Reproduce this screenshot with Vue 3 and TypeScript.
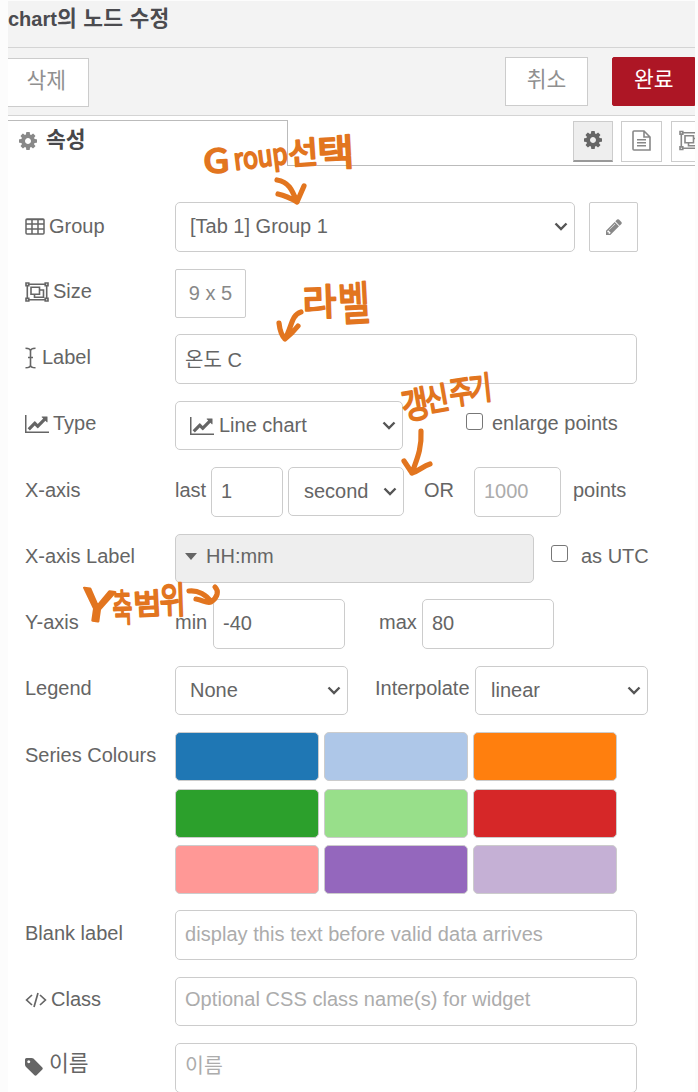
<script setup lang="ts">
import { defineComponent, h, ref } from 'vue'

type Shape = { box: string; d: string; stroke?: number }

const shapes: Record<string, Shape> = {
  cog: { box: '128 128 1536 1536', d: 'M1152 896q0-106-75-181t-181-75-181 75-75 181 75 181 181 75 181-75 75-181zm512-109v222q0 12-8 23t-20 13l-185 28q-19 54-39 91 35 50 107 138 10 12 10 25t-9 23q-27 37-99 108t-94 71q-12 0-26-9l-138-108q-44 23-91 38-16 136-29 186-7 28-36 28h-222q-14 0-24.5-8.5t-11.5-21.5l-28-184q-49-16-90-37l-141 107q-10 9-25 9-14 0-25-11-126-114-165-168-7-10-7-23 0-12 8-23 15-21 51-66.5t54-70.5q-27-50-41-99l-183-27q-13-2-21-12.5t-8-23.5v-222q0-12 8-23t19-13l186-28q14-46 39-92-40-57-107-138-10-12-10-24 0-10 9-23 26-36 98.5-107.5t94.5-71.5q13 0 26 10l138 107q44-23 91-38 16-136 29-186 7-28 36-28h222q14 0 24.5 8.5t11.5 21.5l28 184q49 16 90 37l142-107q9-9 24-9 13 0 25 10 129 119 165 170 7 8 7 22 0 12-8 23-15 21-51 66.5t-54 70.5q26 50 41 98l183 28q13 2 21 12.5t8 23.5z' },
  tag: { box: '128 128 1536 1536', d: 'M576 448q0-53-37.5-90.5t-90.5-37.5-90.5 37.5-37.5 90.5 37.5 90.5 90.5 37.5 90.5-37.5 37.5-90.5zm1067 576q0 53-37 90l-491 492q-39 37-91 37-53 0-90-37l-715-716q-38-37-64.5-101t-26.5-117v-416q0-52 38-90t90-38h416q53 0 117 26.5t102 64.5l715 714q37 39 37 91z' },
  pencil: { box: '128 128 1536 1536', d: 'M491 1536l91-91-235-235-91 91v107h128v128h107zm523-928q0-22-22-22-10 0-17 7l-542 542q-7 7-7 17 0 22 22 22 10 0 17-7l542-542q7-7 7-17zm-54-192l416 416-832 832h-416v-416zm683 96q0 53-37 90l-166 166-416-416 166-165q36-38 90-38 53 0 91 38l235 234q37 39 37 91z' },
  line: { box: '0 128 2048 1536', d: 'M2048 1536v128h-2048v-1536h128v1408h1920zm-128-1248v435q0 21-19.5 29.5t-35.5-7.5l-121-121-633 633q-10 10-23 10t-23-10l-233-233-416 416-192-192 585-585q10-10 23-10t23 10l233 233 464-464-121-121q-16-16-7.5-35.5t29.5-19.5h435q14 0 23 9t9 23z' },
  table: { box: '0 0 20 17', stroke: 1.5, d: 'M2 1H18Q19 1 19 2V15Q19 16 18 16H2Q1 16 1 15V2Q1 1 2 1ZM1 1.6H19M1 6H19M1 11H19M7 1V16M13 1V16' },
  objects: { box: '0 0 24 20', stroke: 1.6, d: 'M3.5 2.2H20.5M3.5 17.8H20.5M2.3 3.5V16.5M21.7 3.5V16.5M1 1H3.8V3.6H1ZM20.2 1H23V3.6H20.2ZM1 16.4H3.8V19H1ZM20.2 16.4H23V19H20.2ZM6 5.2H14.5V12.2H6ZM14.5 8H18.5V15.3H9.5V12.2' },
  cursor: { box: '0 0 11 22', stroke: 1.6, d: 'M0.5 1.2Q5.5 1.2 5.5 4V18Q5.5 20.8 0.5 20.8M10.5 1.2Q5.5 1.2 5.5 4M10.5 20.8Q5.5 20.8 5.5 18M3 10.5H8' },
  code: { box: '0 0 22 16', stroke: 1.7, d: 'M7 3L1.6 8L7 13M15 3L20.4 8L15 13M13 1L9 15' },
  file: { box: '0 0 19 21', stroke: 1.6, d: 'M2 1H12L18 7V20H2Q1 20 1 19V2Q1 1 2 1ZM12 1V7H18M5 9.8H14M5 12.8H14M5 15.8H14' },
  chevron: { box: '0 0 14 9', stroke: 2.4, d: 'M1.5 1.5L7 7L12.5 1.5' },
  caret: { box: '0 0 12 7', d: 'M0 0H12L6 7Z' }
}

const Icon = defineComponent({
  props: { name: { type: String, required: true } },
  setup(props) {
    return () => {
      const s = shapes[props.name]
      return h('svg', { viewBox: s.box, class: ['icon', 'icon-' + props.name], 'aria-hidden': 'true' }, [
        h('path', {
          d: s.d,
          fill: s.stroke ? 'none' : 'currentColor',
          stroke: s.stroke ? 'currentColor' : 'none',
          'stroke-width': s.stroke ?? 0
        })
      ])
    }
  }
})

const label = ref('온도 C')
const period = ref('1')
const points = ref('')
const yMin = ref('-40')
const yMax = ref('80')
const blank = ref('')
const cssClass = ref('')
const nodeName = ref('')
const enlarge = ref(false)
const utc = ref(false)
const colours = ['#1f77b4', '#aec7e8', '#ff7f0e', '#2ca02c', '#98df8a', '#d62728', '#ff9896', '#9467bd', '#c5b0d5']

type Ink = { t: string; x: number; y: number; w: number; size: number; rot: number }
const ink: Ink[] = [
  { t: 'G', x: 204, y: 173, w: 26, size: 32, rot: -3 },
  { t: 'roup', x: 235, y: 170, w: 54, size: 29, rot: -7 },
  { t: '선', x: 289, y: 165, w: 30, size: 31, rot: -4 },
  { t: '택', x: 318, y: 167, w: 37, size: 37, rot: -3 },
  { t: '라', x: 303, y: 316, w: 34, size: 37, rot: -2 },
  { t: '벨', x: 339, y: 321, w: 32, size: 46, rot: -3 },
  { t: '갱', x: 404, y: 420, w: 27, size: 36, rot: -10 },
  { t: '신', x: 427, y: 412, w: 24, size: 31, rot: -10 },
  { t: '주', x: 451, y: 405, w: 23, size: 32, rot: -8 },
  { t: '기', x: 470, y: 401, w: 23, size: 32, rot: -6 },
  { t: 'Y', x: 80, y: 619, w: 31, size: 43, rot: 8 },
  { t: '축', x: 113, y: 622, w: 20, size: 38, rot: -2 },
  { t: '범', x: 134, y: 615, w: 28, size: 29, rot: -3 },
  { t: '위', x: 160, y: 614, w: 26, size: 37, rot: -2 }
]
const arrows = [
  'M277 180C289 182 292 190 297 202M278 194C287 196 292 199 297 202L304 186',
  'M301 312C291 315 292 327 285 339M279 323C280 332 282 336 285 339C289 336 294 331 298 326',
  'M421 431C422 450 416 461 412 473M404 461L412 473C419 471 423 466 430 464',
  'M189 591C198 590 207 595 211 602M196 599C203 600 207 604 211 602C218 597 219 591 215 587'
]
</script>

<template>
  <main class="screen">
    <section class="tray">
      <header class="title">chart<span class="hangul">의 노드 수정</span></header>
      <div class="toolbar">
        <button class="btn delete">삭제</button>
        <button class="btn cancel">취소</button>
        <button class="btn done">완료</button>
      </div>
      <nav class="tabs">
        <div class="tab"><Icon name="cog" /><span>속성</span></div>
        <div class="tab-tools">
          <button class="tool active"><Icon name="cog" /></button>
          <button class="tool"><Icon name="file" /></button>
          <button class="tool cut"><Icon name="objects" /></button>
        </div>
      </nav>

      <form class="form" @submit.prevent>
        <div class="row r67">
          <label class="name low"><Icon name="table" />Group</label>
          <div class="select group">[Tab 1] Group 1<Icon name="chevron" /></div>
          <button class="edit"><Icon name="pencil" /></button>
        </div>
        <div class="row r65">
          <label class="name high"><Icon name="objects" />Size</label>
          <button class="size">9 x 5</button>
        </div>
        <div class="row r67">
          <label class="name"><Icon name="cursor" />Label</label>
          <input v-model="label" class="field full" />
        </div>
        <div class="row r66">
          <label class="name high"><Icon name="line" />Type</label>
          <div class="select type"><Icon name="line" />Line chart<Icon name="chevron" /></div>
          <label class="check enlarge"><input v-model="enlarge" type="checkbox" />enlarge points</label>
        </div>
        <div class="row r67">
          <label class="name">X-axis</label>
          <span class="word last">last</span>
          <input v-model="period" class="field period" />
          <div class="select unit">second<Icon name="chevron" /></div>
          <span class="word or">OR</span>
          <input v-model="points" class="field points" placeholder="1000" />
          <span class="word">points</span>
        </div>
        <div class="row r65">
          <label class="name high">X-axis Label</label>
          <div class="format"><Icon name="caret" />HH:mm</div>
          <label class="check utc"><input v-model="utc" type="checkbox" />as UTC</label>
        </div>
        <div class="row r67">
          <label class="name">Y-axis</label>
          <span class="word min">min</span>
          <input v-model="yMin" class="field range" />
          <span class="word max">max</span>
          <input v-model="yMax" class="field range" />
        </div>
        <div class="row r66">
          <label class="name high">Legend</label>
          <div class="select legend">None<Icon name="chevron" /></div>
          <span class="word interp">Interpolate</span>
          <div class="select legend linear">linear<Icon name="chevron" /></div>
        </div>
        <div class="row r178">
          <label class="name">Series Colours</label>
          <div class="swatches">
            <span v-for="c in colours" :key="c" class="swatch" :style="{ backgroundColor: c }"></span>
          </div>
        </div>
        <div class="row r67">
          <label class="name">Blank label</label>
          <input v-model="blank" class="field full" placeholder="display this text before valid data arrives" />
        </div>
        <div class="row r66">
          <label class="name high"><Icon name="code" />Class</label>
          <input v-model="cssClass" class="field full short" placeholder="Optional CSS class name(s) for widget" />
        </div>
        <div class="row r49">
          <label class="name korean"><Icon name="tag" /><span>이름</span></label>
          <input v-model="nodeName" class="field full last-field" placeholder="이름" />
        </div>
      </form>
    </section>

    <svg class="ink" viewBox="0 0 698 1092" width="698" height="1092">
      <text
        v-for="(g, i) in ink"
        :key="i"
        :x="g.x"
        :y="g.y"
        :font-size="g.size"
        :textLength="g.w"
        lengthAdjust="spacingAndGlyphs"
        :transform="`rotate(${g.rot} ${g.x} ${g.y})`"
      >{{ g.t }}</text>
      <path v-for="a in arrows" :key="a" :d="a" />
    </svg>
  </main>
</template>

<style>
html, body { margin: 0; background: #fff; overflow: hidden; }
.icon { display: block; flex: none; }
.icon-table { width: 20px; height: 17px; }
.icon-objects { width: 24px; height: 20px; }
.icon-line { width: 24px; height: 18px; }
.icon-code { width: 22px; height: 16px; }
.icon-caret { width: 12px; height: 7px; }
</style>

<style scoped>
* { box-sizing: border-box; }
.screen {
  position: relative; width: 698px; height: 1092px; overflow: hidden;
  padding: 1px 3px 0 8px; background: #fcfcfc;
  font: 20px/47px "Liberation Sans", "Noto Sans CJK KR", sans-serif; color: #656565;
}
button, input { font: inherit; color: inherit; margin: 0; }
button { display: flex; align-items: center; justify-content: center; padding: 0; background: #fff; border: 1px solid #ccc; }
.tray { height: 1091px; overflow: hidden; background: #fff; }
.title {
  height: 47px; background: #f3f3f3; border-bottom: 1px solid #d4d4d4;
  font-weight: 700; font-size: 20px; line-height: 37px; color: #4b4b4f; white-space: nowrap;
}
.hangul { font-size: 21.5px; line-height: 1; letter-spacing: 0.25px; }
.toolbar { display: flex; height: 68px; background: #f3f3f3; border-bottom: 1px solid #d4d4d4; padding-top: 9px; }
.btn { height: 49px; font-size: 21.5px; color: #909090; padding-bottom: 2px; }
.delete { width: 81px; margin-top: 1px; border-left: 0; padding-right: 3px; }
.cancel { width: 84px; margin-left: 416px; }
.done { width: 83px; margin-left: 24px; background: #ad1625; border-color: #ad1625; border-radius: 2px 0 0 2px; color: #fff; }
.tabs { display: flex; height: 50px; padding-top: 4px; }
.tab {
  display: flex; align-items: center; width: 280px; height: 46px; padding: 0 0 5px 11px;
  border-top: 1px solid #bbb; border-right: 1px solid #bbb;
  font-size: 21.5px; font-weight: 700; color: #47474a;
}
.tab span { position: relative; top: -1px; }
.tab .icon { width: 18px; height: 18px; margin-right: 9px; color: #888; }
.tab-tools { display: flex; flex: 1; height: 46px; padding-left: 285px; border-bottom: 1px solid #bbb; overflow: hidden; }
.tool { flex: none; width: 41px; height: 41px; margin: 1px 8px 0 0; color: #888; }
.tool.active { width: 40px; background: #eee; border-bottom: 2px solid #999; color: #666; }
.tool .icon-cog { width: 18px; height: 18px; margin-bottom: 2px; }
.tool .icon-file { width: 19px; height: 21px; margin-bottom: 2px; }
.tool.cut { margin-left: 1px; justify-content: flex-start; padding-left: 7px; }
.tool .icon-objects { width: 24px; height: 21px; margin-bottom: 2px; }
.form { padding: 36px 0 0 17px; }
.row { display: flex; align-items: flex-start; }
.r49 { height: 49px; }
.r65 { height: 65px; }
.r66 { height: 66px; }
.r67 { height: 67px; }
.r178 { height: 178px; }
.name { display: flex; align-items: center; flex: none; width: 150px; height: 47px; white-space: nowrap; }
.name.low { height: 49px; }
.name.high { height: 45px; }
.name .icon { margin-right: 4px; }
.name .icon-cursor { width: 11px; height: 22px; margin-right: 6px; }
.name .icon-tag { width: 18px; height: 18px; margin-right: 6px; }
.korean { font-size: 21.5px; }
.korean span { position: relative; top: -2px; }
.select, .field, .format { flex: none; height: 49px; border: 1px solid #ccc; border-radius: 5px; background: #fff; white-space: nowrap; }
.select { display: flex; align-items: center; padding: 0 0 0 14px; }
.select .icon-line { margin-right: 5px; }
.icon-chevron { width: 14px; height: 9px; margin-left: auto; margin-right: 6px; color: #555; }
.group { width: 400px; height: 50px; padding-bottom: 2px; }
.edit { width: 49px; height: 50px; margin-left: 14px; border-radius: 2px; color: #888; }
.edit .icon { width: 16px; height: 16px; margin-bottom: 1px; }
.size { width: 71px; height: 49px; color: #888; border-radius: 2px; }
.field { height: 50px; padding: 0 9px 2px; outline: 0; }
.field::placeholder { color: #acacac; opacity: 1; }
.full { width: 462px; letter-spacing: 0.05px; }
.short { height: 49px; padding-bottom: 4px; }
.last-field { font-size: 20.5px; padding-bottom: 5px; }
.type { width: 228px; }
.check { display: flex; align-items: center; height: 45px; white-space: nowrap; }
.check input { appearance: none; width: 17px; height: 17px; border: 1.5px solid #777; border-radius: 3px; background: #fff; }
.enlarge { margin-left: 63px; }
.enlarge input { margin: 0 9px 5px 0; }
.word { white-space: nowrap; }
.last { width: 36px; }
.period { width: 72px; }
.unit { width: 116px; margin-left: 5px; padding-left: 15px; }
.or { width: 50px; margin-left: 20px; }
.points { width: 87px; margin-right: 12px; }
.format { display: flex; align-items: center; width: 359px; padding: 0 0 5px 9px; background: #eee; }
.format .icon { margin-right: 9px; }
.utc { margin-left: 17px; }
.utc input { margin: 0 13px 7px 0; }
.min { width: 38px; }
.range { width: 132px; }
.max { width: 43px; margin-left: 34px; }
.legend { width: 173px; }
.linear { padding-left: 15px; }
.interp { width: 100px; margin-left: 27px; line-height: 45px; }
.swatches { display: grid; grid-template-columns: repeat(3, 144px); gap: 7.5px 5px; }
.swatch { height: 49px; border: 1px solid #ccc; border-radius: 5px; }
.ink { position: absolute; left: 0; top: 0; pointer-events: none; }
.ink text {
  font-family: "Noto Sans CJK KR", sans-serif; fill: #e2751f;
  stroke: #e2751f; stroke-width: 2px; stroke-linejoin: round;
}
.ink path { fill: none; stroke: #e2751f; stroke-width: 5.2px; stroke-linecap: round; stroke-linejoin: round; }
</style>
